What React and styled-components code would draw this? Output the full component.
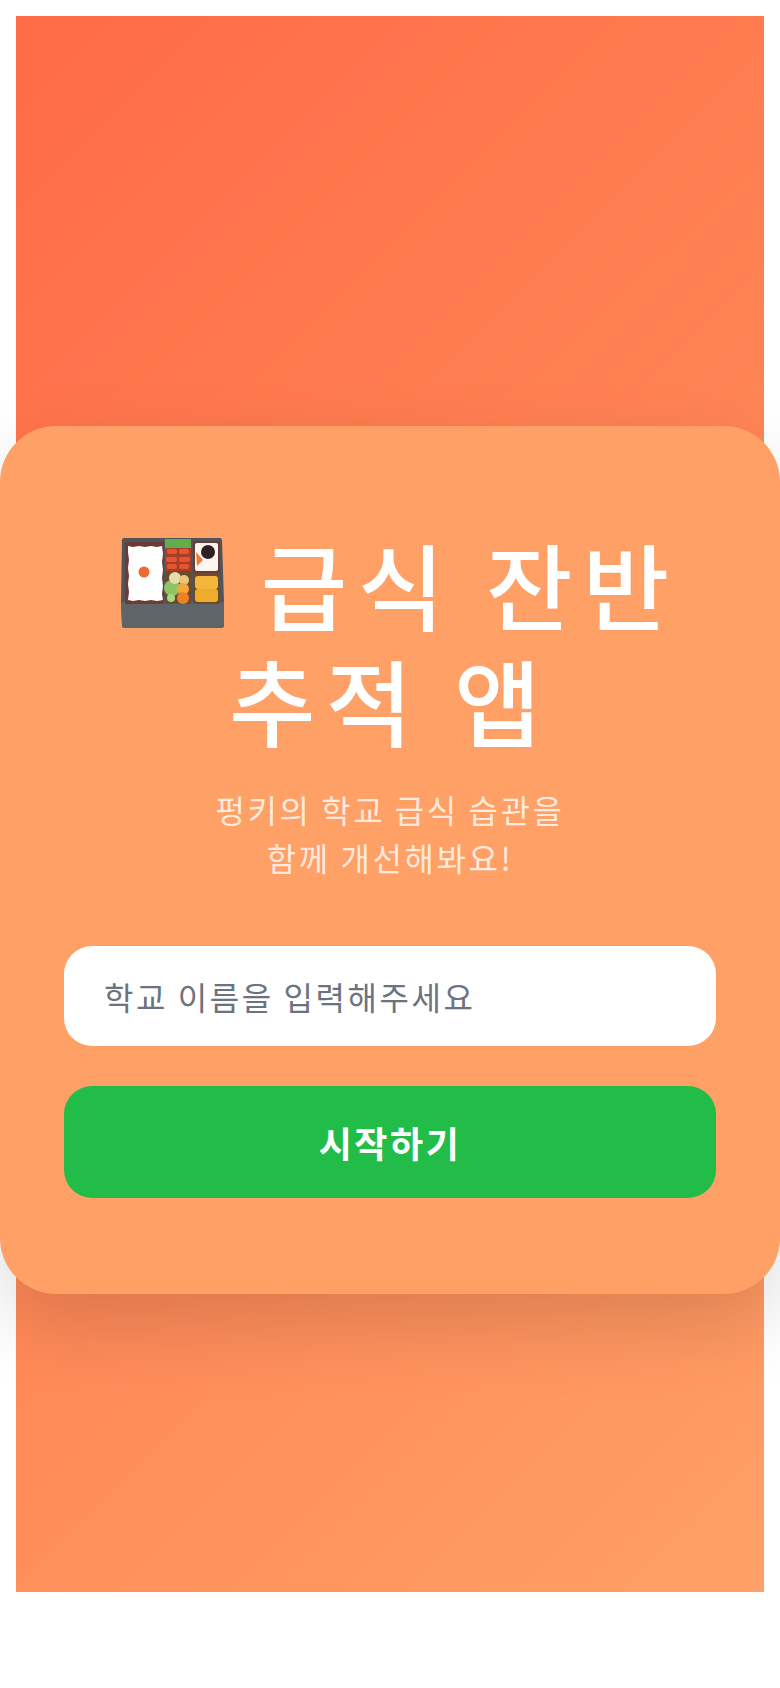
import React from 'react';
import styled, { createGlobalStyle } from 'styled-components';

const GlobalStyle = createGlobalStyle`
  html, body {
    margin: 0;
    padding: 0;
    background: #fff;
    overflow: hidden;
  }
  body {
    font-family: "Noto Sans CJK SC", "Noto Sans", sans-serif;
    letter-spacing: 0.08em;
  }
`;

const Page = styled.div`
  width: 780px;
  height: 1688px;
  box-sizing: border-box;
  padding: 16px;
`;

const Hero = styled.main`
  height: 1576px;
  box-sizing: border-box;
  padding-top: 410px;
  background: linear-gradient(135deg, #ff6b45 0%, #ffa066 100%);
`;

const Card = styled.section`
  margin: 0 -16px;
  height: 868px;
  box-sizing: border-box;
  padding: 99px 64px 0;
  display: flex;
  flex-direction: column;
  align-items: stretch;
  background: #ffa066;
  border-radius: 56px;
  box-shadow: 0 30px 80px rgba(0, 0, 0, 0.14);
`;

const Title = styled.h1`
  margin: 0 -40px;
  font-size: 94px;
  line-height: 116px;
  font-weight: 500;
  letter-spacing: 0.11em;
  color: #fff;
  text-align: center;
`;

const BentoIcon = styled.svg`
  width: 103px;
  height: 90px;
  margin: 0 5px 0 21px;
  vertical-align: -4px;
`;

const Subtitle = styled.p`
  margin: 28px 0 65px;
  font-size: 32px;
  line-height: 48px;
  font-weight: 400;
  letter-spacing: 0.08em;
  color: rgba(255, 255, 255, 0.8);
  text-align: center;
`;

const SchoolInput = styled.input`
  display: block;
  width: 100%;
  height: 100px;
  box-sizing: border-box;
  padding: 0 40px;
  border: 0;
  border-radius: 28px;
  background: #fff;
  font-family: inherit;
  font-size: 32px;
  letter-spacing: 0.08em;
  color: #374151;
  &::placeholder {
    color: #6b7280;
    opacity: 1;
  }
`;

const StartButton = styled.button`
  display: block;
  width: 100%;
  height: 112px;
  margin-top: 40px;
  border: 0;
  border-radius: 28px;
  background: #22bd48;
  color: #fff;
  font-family: inherit;
  font-size: 36px;
  font-weight: 700;
  letter-spacing: 0.07em;
`;

// no emoji font to rely on, so the bento box is drawn by hand
const Bento = () => (
  <BentoIcon viewBox="0 0 103 90" aria-hidden="true">
    <path d="M3 0h96q2 0 2 2l2 62v23q0 3-3 3H4q-3 0-3-3L0 64 1 2q0-2 2-2z" fill="#4f5559" />
    <path d="M0 64h103v23q0 3-3 3H4q-3 0-3-3z" fill="#5f6468" />
    <rect x="4" y="4" width="39" height="62" fill="#6e3a34" />
    <path d="M7 8l5 1 6-1 6 1 6-1 6 1 5-1 1 8-1 8 1 8-1 8 1 8-1 8 1 6-6 1-6-1-6 1-6-1-6 1-5-1 1-8-1-8 1-8-1-8 1-8-1-8z" fill="#fff" />
    <circle cx="23" cy="34" r="5.5" fill="#ee6a30" />
    <rect x="44" y="1" width="26" height="9" fill="#5fae4a" />
    <rect x="44" y="10" width="26" height="23" fill="#a63f2a" />
    <g fill="#e8552c">
      <rect x="46" y="11" width="10" height="5" rx="2" />
      <rect x="58" y="11" width="10" height="5" rx="2" />
      <rect x="45" y="19" width="11" height="5" rx="2" />
      <rect x="58" y="19" width="11" height="5" rx="2" />
      <rect x="46" y="26" width="10" height="5" rx="2" />
      <rect x="58" y="26" width="10" height="5" rx="2" />
    </g>
    <rect x="72" y="3" width="27" height="32" fill="#6e3a34" />
    <rect x="74" y="5" width="23" height="28" rx="2" fill="#fdf6ee" />
    <circle cx="87" cy="14" r="7" fill="#2c2024" />
    <path d="M75 14l7 8-6 6z" fill="#f07a34" />
    <rect x="44" y="33" width="26" height="33" fill="#6c4a2e" />
    <circle cx="51" cy="50" r="8" fill="#8fc464" />
    <circle cx="54" cy="40" r="6" fill="#e8dca8" />
    <circle cx="63" cy="42" r="5" fill="#e8c878" />
    <circle cx="62" cy="51" r="6" fill="#f4a83a" />
    <circle cx="62" cy="60" r="6" fill="#ec8224" />
    <circle cx="50" cy="60" r="4" fill="#a8d880" />
    <rect x="72" y="36" width="27" height="30" fill="#6c4a2e" />
    <rect x="74" y="38" width="23" height="13" rx="3" fill="#f3b53a" />
    <rect x="74" y="51" width="23" height="13" rx="3" fill="#eeab2c" />
  </BentoIcon>
);

export default function App() {
  return (
    <Page>
      <GlobalStyle />
      <Hero>
        <Card>
          <Title>
            <Bento /> 급식 잔반
            <br />
            추적 앱
          </Title>
          <Subtitle>
            펑키의 학교 급식 습관을
            <br />
            함께 개선해봐요!
          </Subtitle>
          <SchoolInput placeholder="학교 이름을 입력해주세요" />
          <StartButton>시작하기</StartButton>
        </Card>
      </Hero>
    </Page>
  );
}
